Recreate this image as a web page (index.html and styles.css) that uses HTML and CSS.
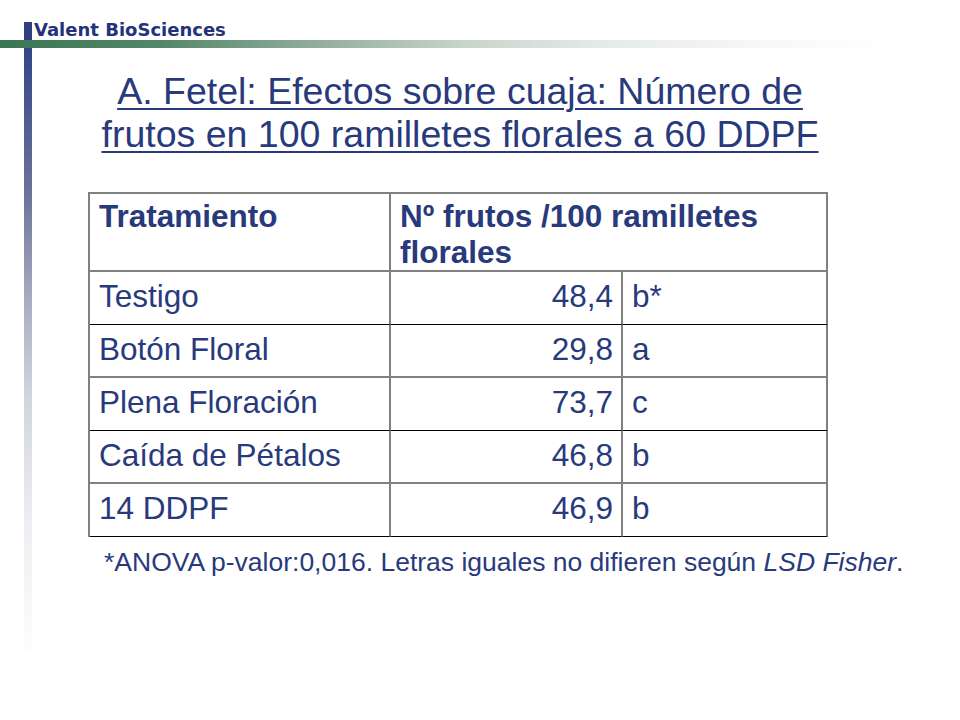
FILE: index.html
```html
<!DOCTYPE html>
<html lang="es">
<head>
<meta charset="utf-8">
<title>Fetel</title>
<link rel="stylesheet" href="styles.css">
</head>
<body>
<div class="slide">
  <header class="brand-row">
    <span class="brand-mark"></span>
    <span class="brand">Valent BioSciences</span>
  </header>
  <div class="top-rule"></div>
  <div class="body">
    <div class="side-bar"></div>
    <main class="main">
      <h1 class="title">A. Fetel: Efectos sobre cuaja: Número de frutos en 100 ramilletes florales a 60 DDPF</h1>
      <table class="data">
        <colgroup>
          <col class="c1"><col class="c2"><col class="c3">
        </colgroup>
        <tr class="head gray">
          <th>Tratamiento</th>
          <th colspan="2">Nº frutos /100 ramilletes florales</th>
        </tr>
        <tr class="black"><td>Testigo</td><td class="num">48,4</td><td>b*</td></tr>
        <tr class="gray"><td>Botón Floral</td><td class="num">29,8</td><td>a</td></tr>
        <tr class="black"><td>Plena Floración</td><td class="num">73,7</td><td>c</td></tr>
        <tr class="gray"><td>Caída de Pétalos</td><td class="num">46,8</td><td>b</td></tr>
        <tr class="black"><td>14 DDPF</td><td class="num">46,9</td><td>b</td></tr>
      </table>
      <p class="note">*ANOVA p-valor:0,016. Letras iguales no difieren según <em>LSD Fisher</em>.</p>
    </main>
  </div>
</div>
</body>
</html>
```

FILE: styles.css
```css
* { box-sizing: border-box; }
html, body { margin: 0; padding: 0; background: #ffffff; }
body { font-family: "Liberation Sans", Arial, sans-serif; color: #283a7b; }

.slide { width: 960px; height: 720px; overflow: hidden; }

.brand-row {
  height: 40px;
  display: flex;
  align-items: flex-end;
  padding-left: 24px;
}
.brand-mark {
  width: 8px;
  height: 18px;
  background: #2e3f82;
}
.brand {
  font-family: "DejaVu Sans", sans-serif;
  font-weight: bold;
  font-size: 18px;
  line-height: 21px;
  letter-spacing: 0;
  margin-left: 2px;
  color: #23327a;
}

.top-rule {
  width: 890px;
  height: 8px;
  background: linear-gradient(to right, #3b7653 0%, #53866a 18%, #8fac99 35%, #c7d4cb 52%, #e6ebe8 68%, #f6f7f6 85%, #ffffff 100%);
}

.body { display: flex; padding-left: 24px; }
.side-bar {
  width: 8px;
  height: 602px;
  background: linear-gradient(to bottom, #33468a 0%, #6d7599 25%, #a9adc2 42%, #d2d5de 58%, #eeeff2 80%, #fdfdfd 100%);
}
.main { width: 856px; }

.title {
  margin: 22px 0 0;
  font-weight: normal;
  font-size: 37.5px;
  line-height: 43px;
  text-align: center;
  text-decoration: underline;
  text-decoration-thickness: 2px;
  text-underline-offset: 4px;
  color: #283a7b;
  padding: 0 40px;
}

.data {
  margin: 36px 0 0 56px;
  border-collapse: separate;
  border-spacing: 0;
  border-top: 2px solid #808080;
  border-left: 2px solid #808080;
  font-size: 31.5px;
  color: #283a7b;
}
.c1 { width: 301px; }
.c2 { width: 232px; }
.c3 { width: 205px; }
.data th, .data td {
  border-right: 2px solid #808080;
  padding: 0 8px 0 9px;
  text-align: left;
  vertical-align: top;
  line-height: 36px;
}
.data th { font-weight: bold; padding-top: 4px; height: 77px; }
.data td { height: 53px; padding-top: 6px; }
.data .num { text-align: right; }
.gray > th, .gray > td { border-bottom: 2px solid #808080; }
.black > td { border-bottom: 1px solid #000000; }

.note {
  margin: 10px 0 0 72px;
  font-size: 26.5px;
  line-height: 30px;
  color: #283a7b;
  white-space: nowrap;
}
.note em { font-style: italic; }
```
